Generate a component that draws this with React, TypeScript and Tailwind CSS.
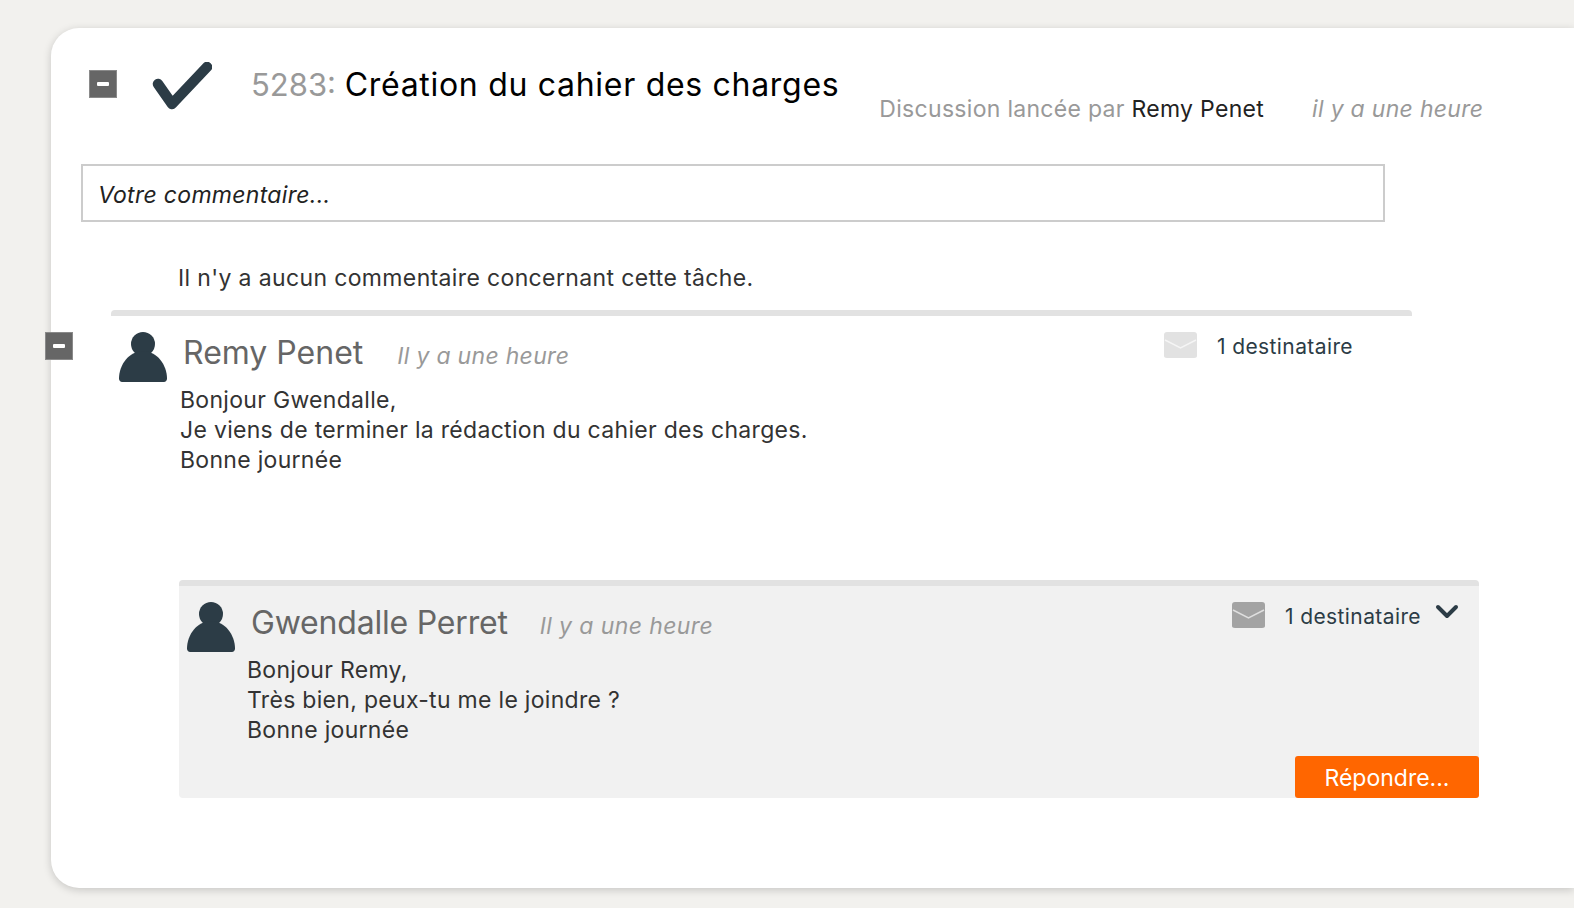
const font = { fontFamily: 'Inter, "Noto Sans", sans-serif' };

function Minus() {
  return (
    <div className="flex h-[28px] w-[28px] shrink-0 items-center justify-center border border-[#8a8a8a] bg-[#666666]">
      <div className="h-[4px] w-[12px] rounded-[1px] bg-white" />
    </div>
  );
}

function Person() {
  return (
    <svg width="48" height="50" viewBox="0 0 48 50" className="shrink-0">
      <circle cx="24" cy="12" r="12" fill="#2c3c46" />
      <path d="M24 19C10 19 0 33 0 46.500C0 48.500 1.500 50 3 50H45C46.500 50 48 48.500 48 46.500C48 33 38 19 24 19Z" fill="#2c3c46" />
    </svg>
  );
}

function Mail({ color }: { color: string }) {
  return (
    <svg width="33" height="26" viewBox="0 0 33 26" className="shrink-0">
      <path d="M3 0H30C32 0 33 1 33 3V24C33 25 32 26 30 26H3C1 26 0 25 0 24V3C0 1 1 0 3 0Z" fill={color} />
      <path d="M1 8L16.500 16L32 8" fill="none" stroke="#ffffff" strokeOpacity="0.65" strokeWidth="1.500" />
    </svg>
  );
}

export default function App() {
  return (
    <div style={font} className="h-[908px] w-[1574px] overflow-hidden bg-[#f2f1ee] pl-[51px] pt-[28px]">
      <div className="h-[860px] w-[1523px] rounded-l-[28px] bg-white pt-[34px] shadow-[0_2px_8px_rgba(0,0,0,0.18)]">
        <div className="flex h-[102px] items-start pl-[38px]">
          <div className="mt-[8px]"><Minus /></div>
          <svg width="60" height="48" viewBox="0 0 60 48" className="ml-[35px] shrink-0">
            <path d="M6 22L20 42L55 5" fill="none" stroke="#2c3c46" strokeWidth="10.500" strokeLinecap="round" strokeLinejoin="round" />
          </svg>
          <div className="ml-[39px] whitespace-nowrap text-[32px] leading-[46px] tracking-[0.7px] text-black">
            <span className="text-[31px] tracking-normal text-[#999999]">5283: </span>Création du cahier des charges
          </div>
          <div className="ml-[40px] mt-[27px] whitespace-nowrap text-[23px] leading-[40px] tracking-[0.3px] text-[#999999]">
            Discussion lancée par <span className="text-[#222222]">Remy Penet</span>
          </div>
          <div className="ml-[48px] mt-[27px] whitespace-nowrap text-[23px] italic leading-[40px] tracking-[0.3px] text-[#999999]">il y a une heure</div>
        </div>

        <div className="ml-[30px] flex h-[58px] w-[1304px] items-center border-2 border-[#cccccc] pl-[15px] pt-[4px] text-[23px] italic tracking-[0.3px] text-[#222222]">
          Votre commentaire...
        </div>

        <div className="ml-[127px] mt-[38px] text-[23px] leading-[36px] tracking-[0.36px] text-[#333333]">Il n'y a aucun commentaire concernant cette tâche.</div>

        <div className="ml-[60px] mt-[14px] h-[6px] w-[1301px] rounded-t-[4px] bg-[#e2e2e2]" />

        <div className="-ml-[6px] flex items-start">
          <div className="mt-[16px]"><Minus /></div>
          <div className="ml-[46px] mt-[16px]"><Person /></div>
          <div className="ml-[16px] w-[1192px]">
            <div className="flex h-[69px] items-start">
              <div className="mt-[15px] whitespace-nowrap text-[32px] leading-[44px] text-[#666666]">Remy Penet</div>
              <div className="ml-[34px] mt-[22px] whitespace-nowrap text-[23px] italic leading-[36px] tracking-[0.3px] text-[#999999]">Il y a une heure</div>
              <div className="ml-auto mt-[16px] flex items-start pr-[22px]">
                <Mail color="#e2e2e2" />
                <span className="ml-[20px] mt-[1px] whitespace-nowrap text-[21px] leading-[28px] tracking-[0.4px] text-[#2c3c46]">1 destinataire</span>
              </div>
            </div>
            <div className="-ml-[3px] text-[23px] leading-[30px] tracking-[0.3px] text-[#333333]">
              <p>Bonjour Gwendalle,</p>
              <p>Je viens de terminer la rédaction du cahier des charges.</p>
              <p>Bonne journée</p>
            </div>
          </div>
        </div>

        <div className="ml-[128px] mt-[105px] h-[218px] w-[1300px] rounded-[4px] border-t-[6px] border-[#e2e2e2] bg-[#f1f1f1]">
          <div className="flex items-start pl-[8px]">
            <div className="mt-[16px]"><Person /></div>
            <div className="ml-[16px] flex-1">
              <div className="flex h-[69px] items-start">
                <div className="mt-[15px] whitespace-nowrap text-[32px] leading-[44px] tracking-[-0.2px] text-[#666666]">Gwendalle Perret</div>
                <div className="ml-[32px] mt-[22px] whitespace-nowrap text-[23px] italic leading-[36px] tracking-[0.4px] text-[#999999]">Il y a une heure</div>
                <div className="ml-auto mt-[16px] flex items-start pr-[20px]">
                  <Mail color="#a3a3a3" />
                  <span className="ml-[20px] mt-[1px] whitespace-nowrap text-[21px] leading-[28px] tracking-[0.4px] text-[#2c3c46]">1 destinataire</span>
                  <svg width="24" height="16" viewBox="0 0 24 16" className="ml-[14px] mt-[2px]">
                    <path d="M3 3L12 12L21 3" fill="none" stroke="#2c3c46" strokeWidth="4" strokeLinecap="round" strokeLinejoin="round" />
                  </svg>
                </div>
              </div>
              <div className="-ml-[4px] text-[23px] leading-[30px] tracking-[0.3px] text-[#333333]">
                <p>Bonjour Remy,</p>
                <p>Très bien, peux-tu me le joindre ?</p>
                <p>Bonne journée</p>
              </div>
            </div>
          </div>
          <div className="mt-[11px] flex justify-end">
            <button className="h-[42px] w-[184px] rounded-[3px] bg-[#ff6600] pt-[2px] text-[23px] text-white">Répondre...</button>
          </div>
        </div>
      </div>
    </div>
  );
}
